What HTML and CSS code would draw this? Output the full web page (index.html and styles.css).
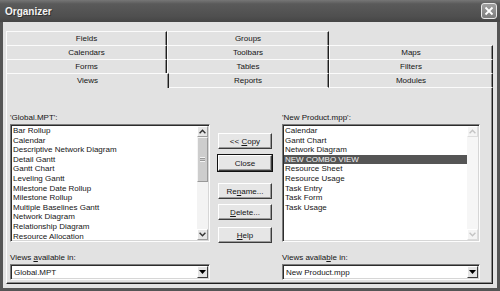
FILE: index.html
```html
<!DOCTYPE html>
<html lang="en">

<head>
    <meta charset="UTF-8">
    <title>Organizer</title>
    <link rel="stylesheet" href="styles.css">
</head>

<body>
    <div class="window">
        <div class="titlebar">
            <span class="title">Organizer</span>
            <span class="close">
                <svg width="10" height="10" viewBox="0 0 10 10"><path d="M1.5 1.5l7 7M8.5 1.5l-7 7" stroke="#fff" stroke-width="1.8" fill="none"/></svg>
            </span>
        </div>

        <div class="client">
            <div class="tabs">
                <div class="tab">Fields</div>
                <div class="tab">Groups</div>
                <div class="tab-empty"></div>
                <div class="tab">Calendars</div>
                <div class="tab">Toolbars</div>
                <div class="tab">Maps</div>
                <div class="tab">Forms</div>
                <div class="tab">Tables</div>
                <div class="tab">Filters</div>
                <div class="tab front active">Views</div>
                <div class="tab front">Reports</div>
                <div class="tab front">Modules</div>
            </div>

            <div class="panel">
                <div class="organizer">
                    <div class="side">
                        <div class="label">'Global.MPT':</div>
                        <div class="listbox">
                            <ul class="items">
                                <li>Bar Rollup</li>
                                <li>Calendar</li>
                                <li>Descriptive Network Diagram</li>
                                <li>Detail Gantt</li>
                                <li>Gantt Chart</li>
                                <li>Leveling Gantt</li>
                                <li>Milestone Date Rollup</li>
                                <li>Milestone Rollup</li>
                                <li>Multiple Baselines Gantt</li>
                                <li>Network Diagram</li>
                                <li>Relationship Diagram</li>
                                <li>Resource Allocation</li>
                            </ul>
                            <div class="scrollbar">
                                <div class="sb-btn">
                                    <svg width="7" height="5" viewBox="0 0 7 5"><path d="M0.6 4.2L3.5 1.2L6.4 4.2" fill="none" stroke="#333" stroke-width="1.4"/></svg>
                                </div>
                                <div class="thumb"><span class="grip"></span></div>
                                <div class="track"></div>
                                <div class="sb-btn">
                                    <svg width="7" height="5" viewBox="0 0 7 5"><path d="M0.6 0.8L3.5 3.8L6.4 0.8" fill="none" stroke="#333" stroke-width="1.4"/></svg>
                                </div>
                            </div>
                        </div>
                    </div>

                    <div class="actions">
                        <button class="btn copy">&lt;&lt; <u>C</u>opy</button>
                        <button class="btn default">Close</button>
                        <button class="btn gap">Re<u>n</u>ame...</button>
                        <button class="btn"><u>D</u>elete...</button>
                        <button class="btn help"><u>H</u>elp</button>
                    </div>

                    <div class="side">
                        <div class="label">'New Product.mpp':</div>
                        <div class="listbox">
                            <ul class="items">
                                <li>Calendar</li>
                                <li>Gantt Chart</li>
                                <li>Network Diagram</li>
                                <li class="selected">NEW COMBO VIEW</li>
                                <li>Resource Sheet</li>
                                <li>Resource Usage</li>
                                <li>Task Entry</li>
                                <li>Task Form</li>
                                <li>Task Usage</li>
                            </ul>
                            <div class="scrollbar disabled">
                                <div class="sb-btn">
                                    <svg width="7" height="5" viewBox="0 0 7 5"><path d="M0.6 4.2L3.5 1.2L6.4 4.2" fill="none" stroke="#c4c4c4" stroke-width="1.4"/></svg>
                                </div>
                                <div class="track"></div>
                                <div class="sb-btn">
                                    <svg width="7" height="5" viewBox="0 0 7 5"><path d="M0.6 0.8L3.5 3.8L6.4 0.8" fill="none" stroke="#c4c4c4" stroke-width="1.4"/></svg>
                                </div>
                            </div>
                        </div>
                    </div>

                    <div class="side">
                        <div class="label">Views <u>a</u>vailable in:</div>
                        <div class="combo">
                            <span class="value">Global.MPT</span>
                            <span class="drop">
                                <svg width="7" height="4" viewBox="0 0 7 4"><path d="M0 0h7L3.5 4z" fill="#000"/></svg>
                            </span>
                        </div>
                    </div>

                    <div></div>

                    <div class="side">
                        <div class="label">Views availa<u>b</u>le in:</div>
                        <div class="combo">
                            <span class="value">New Product.mpp</span>
                            <span class="drop">
                                <svg width="7" height="4" viewBox="0 0 7 4"><path d="M0 0h7L3.5 4z" fill="#000"/></svg>
                            </span>
                        </div>
                    </div>
                </div>
            </div>
        </div>
    </div>
</body>

</html>
```

FILE: styles.css
```css
* {
    box-sizing: border-box;
    font-family: 'Liberation Sans', Arial, sans-serif;
}

body {
    margin: 0;
    background: #4e4e4e;
}

.window {
    width: 500px;
    height: 291px;
    display: flex;
    flex-direction: column;
}

.titlebar {
    height: 22px;
    display: flex;
    align-items: center;
    justify-content: space-between;
    padding: 0 3px 0 5px;
    background: linear-gradient(#767676, #5a5a5a 18%, #4f4f4f 75%, #454545);

    .title {
        color: #f4f4f4;
        font-size: 10px;
        font-weight: bold;
        text-shadow: 1px 1px 0 #333;
    }

    .close {
        width: 16px;
        height: 16px;
        display: flex;
        align-items: center;
        justify-content: center;
        border: 1px solid #e8e8e8;
        border-radius: 3px;
        background: linear-gradient(#a0a0a0, #7c7c7c);
    }
}

.client {
    flex: 1;
    background: #e2e2e2;
    border: solid #555;
    border-width: 0 3px 3px 3px;
    padding: 9px 4px 4px 3px;
    color: #151515;
}

.tabs {
    display: grid;
    grid-template-columns: 161px 162px 164px;
    grid-template-rows: 14px 14px 14px 15px;
    font-size: 8px;
}

.tab {
    text-align: center;
    line-height: 13px;
    border-top: 1px solid #fbfbfb;
    border-left: 1px solid #fbfbfb;
    border-right: 1px solid #1e1e1e;
    box-shadow: inset -1px 0 #8c8c8c;

    &.front {
        border-bottom: 1px solid #fbfbfb;
    }

    &.active {
        border-bottom: none;
        margin-right: -2px;
        position: relative;
        z-index: 1;
        background: #e2e2e2;
    }
}

.panel {
    height: 196px;
    border-left: 1px solid #fbfbfb;
    border-right: 1px solid #1e1e1e;
    border-bottom: 1px solid #1e1e1e;
    box-shadow: inset -1px -1px #8c8c8c;
    padding: 25px 0 4px 3px;
}

.organizer {
    display: grid;
    grid-template-columns: 200px 54px 200px;
    column-gap: 8px;
    row-gap: 10px;

    > :nth-child(3),
    > :nth-child(6) {
        margin-left: 2px;
    }
}

.side {
    display: flex;
    flex-direction: column;
    gap: 1px;
}

.label {
    font-size: 8px;
    line-height: 10px;
}

.listbox {
    height: 118px;
    display: flex;
    background: #fff;
    border: 1px solid;
    border-color: #7c7c7c #fdfdfd #fdfdfd #7c7c7c;
    padding: 1px;
    box-shadow: inset 1px 1px #2c2c2c, inset -1px -1px #d6d6d6;
    overflow: hidden;
}

.items {
    flex: 1;
    list-style: none;
    margin: 0;
    padding: 0;
    font-size: 8px;
    line-height: 9.6px;
    overflow: hidden;

    li {
        padding-left: 1px;
        white-space: nowrap;
    }

    .selected {
        background: #555;
        color: #f2f2f2;
    }
}

.scrollbar {
    width: 11px;
    display: flex;
    flex-direction: column;
    background: #f3f3f3;

    .sb-btn {
        height: 11px;
        display: flex;
        align-items: center;
        justify-content: center;
        background: #e6e6e6;
        border: 1px solid;
        border-color: #fff #9c9c9c #9c9c9c #fff;
    }

    .thumb {
        height: 45px;
        display: flex;
        align-items: center;
        justify-content: center;
        background: #cdcdcd;
        border: 1px solid;
        border-color: #f4f4f4 #999 #999 #f4f4f4;
    }

    .grip {
        width: 5px;
        height: 5px;
        border-top: 1px solid #f4f4f4;
        border-bottom: 1px solid #f4f4f4;
        box-shadow: inset 0 1px #999, inset 0 -1px #999;
    }

    .track {
        flex: 1;
    }

    &.disabled {
        background: #f6f6f6;

        .sb-btn {
            background: #f4f4f4;
            border-color: #fff #dcdcdc #dcdcdc #fff;
        }
    }
}

.actions {
    display: flex;
    flex-direction: column;
    padding-top: 20px;
}

.btn {
    width: 54px;
    height: 16px;
    padding: 0;
    margin-top: 5px;
    font-size: 8px;
    color: #151515;
    background: #e6e6e6;
    border: 1px solid;
    border-color: #fff #3c3c3c #3c3c3c #fff;
    box-shadow: inset -1px -1px #9a9a9a;

    &.copy {
        margin-top: 0;
    }

    &.default {
        outline: 1px solid #111;
        margin-top: 6px;
    }

    &.gap {
        margin-top: 12px;
    }

    &.help {
        margin-top: 7px;
    }
}

.combo {
    height: 16px;
    display: flex;
    align-items: center;
    justify-content: space-between;
    background: #fff;
    border: 1px solid;
    border-color: #7c7c7c #fdfdfd #fdfdfd #7c7c7c;
    padding: 1px;
    box-shadow: inset 1px 1px #2c2c2c, inset -1px -1px #d6d6d6;

    .value {
        font-size: 8px;
        padding-left: 2px;
    }

    .drop {
        width: 11px;
        height: 12px;
        display: flex;
        align-items: center;
        justify-content: center;
        background: #e4e4e4;
        border: 1px solid;
        border-color: #fff #3c3c3c #3c3c3c #fff;
    }
}
```
